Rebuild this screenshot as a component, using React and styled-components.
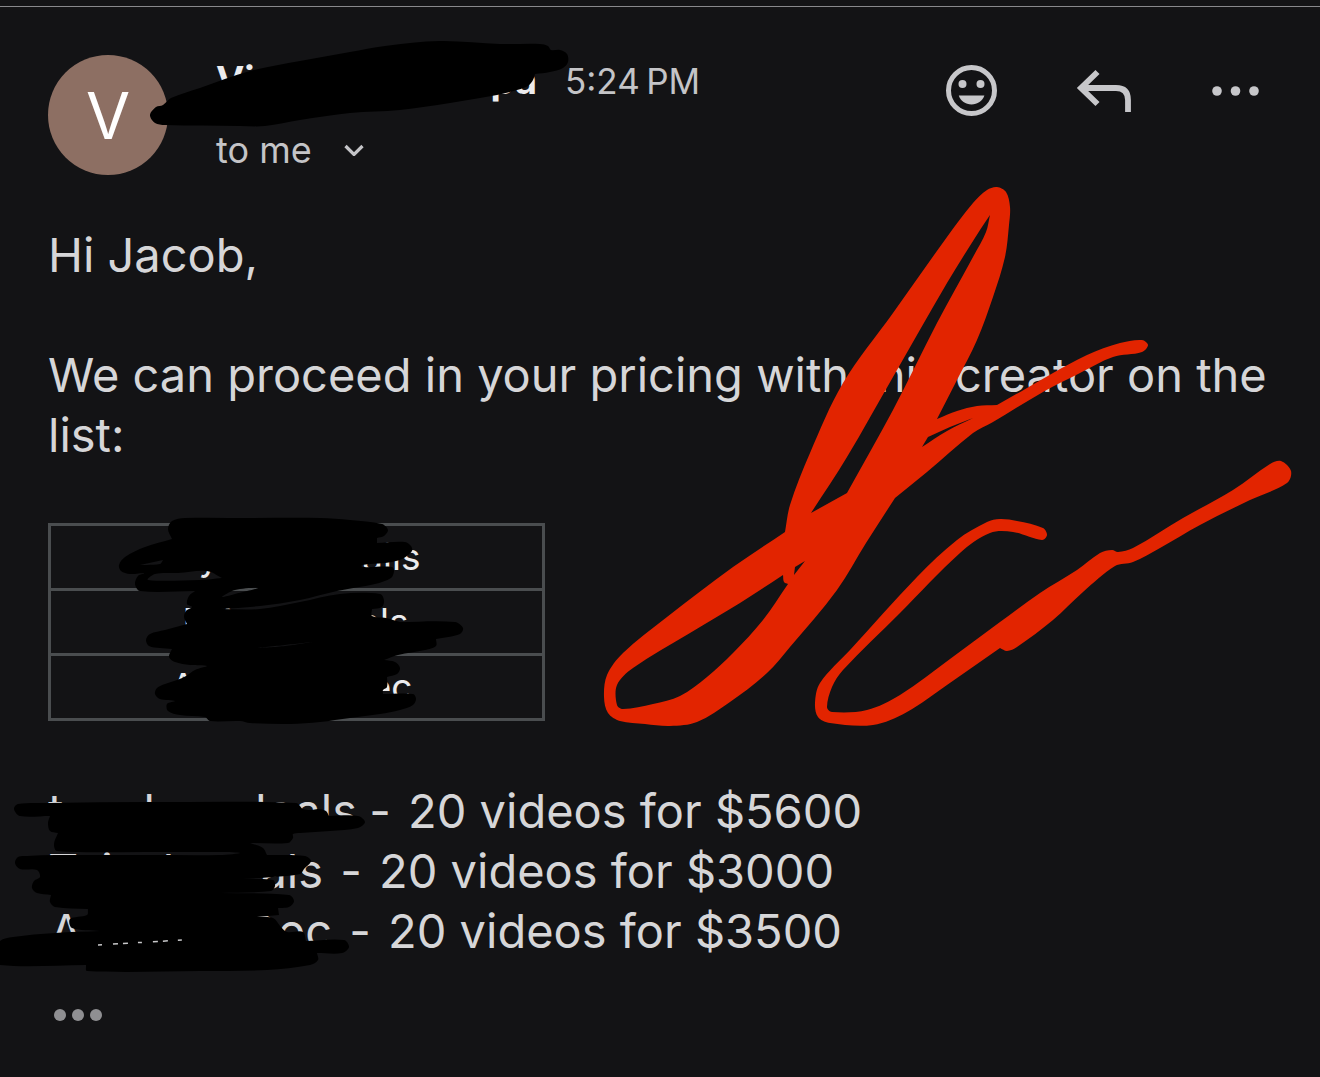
import styled, { createGlobalStyle } from "styled-components";

const GlobalStyle = createGlobalStyle`
  * {
    box-sizing: border-box;
  }

  body {
    margin: 0;
    background: #131315;
    color: #d6d6d8;
    font-family: Inter, "Liberation Sans", sans-serif;
  }
`;

const Page = styled.main`
  position: relative;
  min-height: 100vh;
  padding: 6px 48px 48px;
  overflow: hidden;
`;

const TopRule = styled.hr`
  height: 1px;
  margin: 0 -48px 48px;
  border: 0;
  background: #88888b;
`;

const Header = styled.header`
  display: flex;
  align-items: flex-start;
  padding-right: 6px;
`;

const Avatar = styled.div`
  display: flex;
  align-items: center;
  justify-content: center;
  flex: none;
  width: 120px;
  height: 120px;
  margin-right: 48px;
  border-radius: 50%;
  background: #8d6f63;
  color: #fff;
  font-size: 64px;
`;

const Meta = styled.div`
  flex: 1;
`;

const SenderRow = styled.div`
  display: flex;
  align-items: baseline;
  gap: 28px;
  line-height: 50px;
`;

const Sender = styled.strong`
  display: flex;
  justify-content: space-between;
  width: 321px;
  color: #ececee;
  font-size: 38px;
  font-weight: 700;
`;

const Time = styled.time`
  color: #c4c4c7;
  font-size: 35px;
`;

const RecipientButton = styled.button`
  display: flex;
  align-items: center;
  gap: 32px;
  margin-top: 22px;
  padding: 0;
  border: 0;
  background: none;
  color: #c4c4c7;
  font: inherit;
  font-size: 36px;
  line-height: 44px;
`;

const Actions = styled.div`
  display: flex;
  gap: 72px;
`;

const IconButton = styled.button`
  display: flex;
  align-items: center;
  justify-content: center;
  width: 60px;
  height: 72px;
  padding: 0;
  border: 0;
  background: none;
  color: #c7c7ca;
`;

const Body = styled.section`
  margin-top: 50px;
  font-size: 47px;
  line-height: 60px;
`;

const Paragraph = styled.p`
  margin: 0 0 60px;

  &:last-of-type {
    margin-bottom: 58px;
  }
`;

const BrandTable = styled.table`
  width: 497px;
  border-collapse: collapse;
  color: #ececee;
  font-size: 37px;
  line-height: 62px;
`;

const BrandCell = styled.td`
  padding: 0;
  border: 3px solid #4a4d4f;
`;

const Redacted = styled.span`
  display: inline-flex;
  width: ${({ $width }) => $width}px;
`;

const CellText = styled(Redacted)`
  display: flex;
  margin: 0 auto;
`;

const Fragment = styled.span`
  flex: none;
  margin-left: ${({ $gap }) => $gap}px;

  &:last-child {
    margin-left: auto;
  }
`;

const Offers = styled.ul`
  margin: 60px 0 0;
  padding: 0;
  list-style: none;
`;

const Offer = styled.li`
  white-space: pre;
`;

const Dash = styled.span`
  margin: 0 4px;
`;

const QuoteToggle = styled.button`
  display: flex;
  gap: 6px;
  margin: 48px 0 0 6px;
  padding: 0;
  border: 0;
  background: none;
`;

const QuoteDot = styled.span`
  width: 12px;
  height: 12px;
  border-radius: 50%;
  background: #8f8f92;
`;

const Markup = styled.svg`
  position: absolute;
  top: 0;
  left: 0;
  pointer-events: none;
`;

const brands = [
  { width: 248, start: [["", 0], ["y", 26]], end: "ails" },
  { width: 224, start: [["D", -2], ["i", 14]], end: "als" },
  { width: 232, start: [["A", -10]], end: "ec" },
];

const offers = [
  {
    width: 304,
    start: [["t", 0], ["l", 80], ["d", 83]],
    end: "eals",
    text: "20 videos for $5600",
  },
  {
    width: 275,
    start: [["T", 0], ["i", 23], ["l", 50]],
    end: "als",
    text: "20 videos for $3000",
  },
  {
    width: 284,
    start: [["A", 2]],
    end: "Dec",
    text: "20 videos for $3500",
  },
];

// outlines of the pen strokes; a repeated point makes a sharp corner
const nameStroke = [
  "150,115 156,107 163,105 171,98 200,88 250,71 300,61 350,52 385,46 440,41 500,44 540,44 548,46 551,50 560,50 567,54 568,62 563,68 550,72 535,74 535,74 533,80 528,86 517,90 497,95 480,98 450,103 400,110 350,113 300,120 265,126 240,126 165,125 155,123",
];

const tableStrokes = [
  "168,529 172,521 185,518 250,518 320,518 350,520 382,524 388,530 384,536 377,538 377,538 377,543 377,543 405,542 411,546 412,551 404,558 396,561 385,563 362,565 362,567 392,567 394,571 391,578 375,584 337,591 300,600 260,606 220,609 220,609 260,609 300,602 340,594 380,594 384,600 382,607 372,609 372,609 372,616 386,618 400,622 400,622 455,622 463,628 460,634 436,639 436,639 436,646 425,650 398,655 384,660 384,660 395,662 400,668 397,674 387,677 387,677 387,687 383,690 383,694 383,694 413,694 416,699 413,705 400,710 380,714 350,718 320,722 290,724 250,723 240,721 210,721 205,717 180,715 168,711 167,704 175,701 160,699 155,694 157,688 165,684 177,680 186,676 195,670 207,666 190,665 175,662 169,657 172,649 172,649 160,648 149,646 146,640 150,634 165,630 187,624 187,624 184,617 186,611 192,607 187,604 189,596 195,591 195,591 140,591 135,584 138,576 145,573 130,574 121,571 119,565 125,557 145,547 172,539 172,539",
  "140,565 140,565 163,560 163,560 160,564",
  "148,580 155,574 178,573 207,571 222,578 222,578 200,580",
  "222,597 235,590 258,588 235,594",
  "258,648 285,645 312,642 285,646",
];

const offerStrokes = [
  "14,809 18,804 50,803 150,802 296,803 303,809 312,810 318,809 326,811 329,816 329,816 358,816 365,822 358,828 330,831 300,833 293,834 293,838 288,843 250,843 250,843 263,848 267,855 267,855 305,856 311,861 304,869 300,874 273,877 242,879 242,879 273,880 275,886 271,891 220,893 220,893 289,895 294,901 289,907 278,908 278,908 279,915 279,915 257,917 257,917 273,918 281,927 287,932 303,932 306,941 306,941 344,940 349,947 342,953 317,953 317,953 318,960 310,965 267,970 200,971 87,971 86,965 86,965 0,965 -8,955 0,941 13,937 55,933 100,931 100,931 72,928 70,919 87,915 88,909 88,909 55,907 50,902 51,895 51,895 37,893 32,888 34,881 40,877 37,870 20,869 15,863 18,857 27,856 55,855 150,855 220,855 240,853 220,852 150,852 57,851 54,844 58,833 58,833 50,831 48,823 50,816 50,816 20,816",
];

const checkStroke = [
  "997,187 1006,192 1010,207 1009,225 1005,257 993,297 977,340 957,380 937,419 937,419 957,411 977,406 997,405 997,405 1027,388 1053,373 1087,355 1120,343 1142,340 1148,345 1142,352 1113,357 1080,373 1043,392 993,422 973,433 927,472 895,498 895,498 866,543 837,590 790,647 767,673 730,702 697,722 670,726 645,724 620,721 608,713 604,697 607,675 623,653 667,617 733,567 785,532 785,532 790,505 810,453 843,383 893,313 947,237 973,203 987,190",
  "990,215 990,215 980,230 947,283 893,377 847,457 811,513 811,513 847,493 847,493 893,410 937,323 973,257 986,232",
  "928,437 928,437 950,427 973,418 973,418 947,431 922,447 922,447",
  "805,561 805,561 795,567 795,567 794,575 794,575",
  "783,575 783,575 784,582 788,584 788,584 763,620 733,653 707,677 680,696 653,704 623,709 617,705 617,685 633,668 690,633 740,603",
];

const tailStroke = [
  "1047,535 1042,540 1013,532 990,533 960,553 900,613 843,670 832,687 827,707 832,712 867,710 900,695 950,659 1000,622 1040,593 1077,570 1100,553 1112,550 1118,552 1133,548 1183,518 1233,490 1270,464 1281,461 1291,471 1287,483 1250,500 1200,525 1160,548 1133,562 1115,566 1083,592 1053,620 1017,647 1007,651 1000,648 1000,648 947,685 907,712 873,725 830,723 818,717 815,703 820,683 850,650 917,577 957,540 987,522 1000,519 1017,521 1043,528",
];

// closed curve through the points, tangents weighted by the distance between them
function outline(points) {
  const p = points.split(" ").map((pair) => pair.split(",").map(Number));
  const at = (i) => p[(i + p.length) % p.length];
  const dist = (a, b) => Math.hypot(b[0] - a[0], b[1] - a[1]);

  const tangents = p.map((point, i) => {
    const prev = at(i - 1);
    const next = at(i + 1);
    const length = dist(prev, point) + dist(point, next) || 1;
    return [(next[0] - prev[0]) / length, (next[1] - prev[1]) / length];
  });

  const curves = p.map((from, i) => {
    const to = at(i + 1);
    const d = dist(from, to) / 3;
    const t1 = tangents[i];
    const t2 = tangents[(i + 1) % p.length];
    const c1 = [from[0] + t1[0] * d, from[1] + t1[1] * d];
    const c2 = [to[0] - t2[0] * d, to[1] - t2[1] * d];
    return `C${c1} ${c2} ${to}`;
  });
  return `M${p[0]}${curves.join("")}Z`;
}

function Stroke({ outlines, color }) {
  return (
    <path d={outlines.map(outline).join("")} fill={color} fillRule="evenodd" />
  );
}

function Fragments({ start, end }) {
  return (
    <>
      {start.map(([text, gap], i) => (
        <Fragment key={i} $gap={gap}>
          {text}
        </Fragment>
      ))}
      <Fragment>{end}</Fragment>
    </>
  );
}

function SmileIcon() {
  return (
    <svg width="52" height="52" viewBox="0 0 52 52" fill="currentColor">
      <circle cx="25.500" cy="25.500" r="23" fill="none" stroke="currentColor" strokeWidth="5" />
      <circle cx="16.500" cy="19" r="4" />
      <circle cx="34.500" cy="19" r="4" />
      <path d="M12.800 30.500h25.600C36.500 36 31.500 39.500 25.500 39.500S14.500 36 12.800 30.500Z" />
    </svg>
  );
}

function ReplyIcon() {
  return (
    <svg width="56" height="44" viewBox="0 0 56 44" fill="none" stroke="currentColor" strokeWidth="5.800">
      <path d="M21.500 3 5 19l16.500 16M5 19h35q12 0 12 12v12" />
    </svg>
  );
}

function MoreIcon() {
  return (
    <svg width="48" height="10" viewBox="0 0 48 10" fill="currentColor">
      <circle cx="5" cy="5" r="4.800" />
      <circle cx="23.500" cy="5" r="4.800" />
      <circle cx="42" cy="5" r="4.800" />
    </svg>
  );
}

export default function App() {
  return (
    <Page>
      <GlobalStyle />
      <TopRule />
      <Header>
        <Avatar>V</Avatar>
        <Meta>
          <SenderRow>
            <Sender>
              <span>Vi</span>
              <span>pa</span>
            </Sender>
            <Time>5:24{"\u202f"}PM</Time>
          </SenderRow>
          <RecipientButton>
            to me
            <svg width="20" height="12" viewBox="0 0 20 12" fill="none" stroke="currentColor" strokeWidth="3.200">
              <path d="m1.500 2 8.500 8.500L18.500 2" />
            </svg>
          </RecipientButton>
        </Meta>
        <Actions>
          <IconButton aria-label="Add reaction">
            <SmileIcon />
          </IconButton>
          <IconButton aria-label="Reply">
            <ReplyIcon />
          </IconButton>
          <IconButton aria-label="More">
            <MoreIcon />
          </IconButton>
        </Actions>
      </Header>

      <Body>
        <Paragraph>Hi Jacob,</Paragraph>
        <Paragraph>
          We can proceed in your pricing with this creator on the list:
        </Paragraph>
        <BrandTable>
          <tbody>
            {brands.map((brand) => (
              <tr key={brand.end}>
                <BrandCell>
                  <CellText $width={brand.width}>
                    <Fragments start={brand.start} end={brand.end} />
                  </CellText>
                </BrandCell>
              </tr>
            ))}
          </tbody>
        </BrandTable>
        <Offers>
          {offers.map((offer) => (
            <Offer key={offer.text}>
              <Redacted $width={offer.width}>
                <Fragments start={offer.start} end={offer.end} />
              </Redacted>
              <Dash> - </Dash>
              {offer.text}
            </Offer>
          ))}
        </Offers>
      </Body>

      <QuoteToggle aria-label="Show quoted text">
        <QuoteDot />
        <QuoteDot />
        <QuoteDot />
      </QuoteToggle>

      <Markup width="1320" height="1077" viewBox="0 0 1320 1077" aria-hidden="true">
        <Stroke outlines={nameStroke} color="#000" />
        <Stroke outlines={tableStrokes} color="#000" />
        <Stroke outlines={offerStrokes} color="#000" />
        <path d="M98 945 182 940" stroke="#c8c8ca" strokeWidth="1.500" strokeDasharray="4 11 5 5 5 10" />
        <Stroke outlines={checkStroke} color="#e22400" />
        <Stroke outlines={tailStroke} color="#e22400" />
      </Markup>
    </Page>
  );
}
